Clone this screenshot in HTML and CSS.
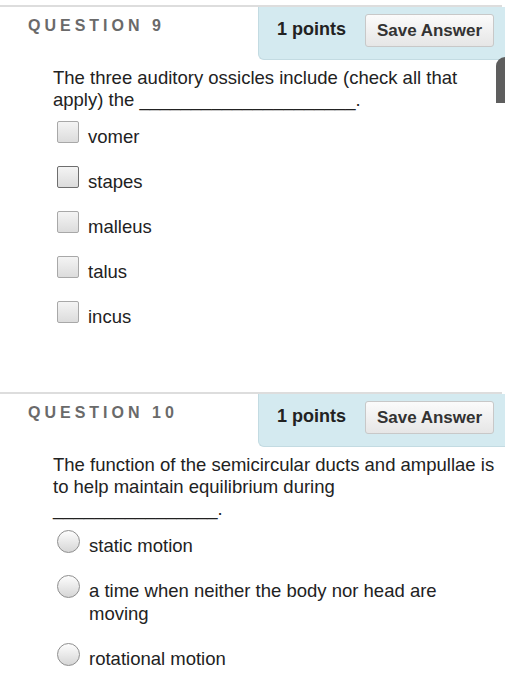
FILE: index.html
```html
<!DOCTYPE html>
<html lang="en">
<head>
<meta charset="utf-8">
<title>Quiz</title>
<link rel="stylesheet" href="styles.css">
</head>
<body>
<section class="question q9">
  <header class="q-head">
    <h2 class="q-title">QUESTION 9</h2>
    <div class="q-points">
      <span class="pts">1 points</span>
      <button class="save" type="button">Save Answer</button>
    </div>
  </header>
  <div class="q-body">
    <p class="q-text">The three auditory ossicles include (check all that apply) the _____________________.</p>
    <ul class="opts">
      <li class="opt"><span class="check"></span><span class="lbl">vomer</span></li>
      <li class="opt"><span class="check focus"></span><span class="lbl">stapes</span></li>
      <li class="opt"><span class="check"></span><span class="lbl">malleus</span></li>
      <li class="opt"><span class="check"></span><span class="lbl">talus</span></li>
      <li class="opt"><span class="check"></span><span class="lbl">incus</span></li>
    </ul>
  </div>
  <div class="scroll-tab"></div>
</section>
<section class="question q10">
  <header class="q-head">
    <h2 class="q-title">QUESTION 10</h2>
    <div class="q-points">
      <span class="pts">1 points</span>
      <button class="save" type="button">Save Answer</button>
    </div>
  </header>
  <div class="q-body">
    <p class="q-text">The function of the semicircular ducts and ampullae is to help maintain equilibrium during<br>________________.</p>
    <ul class="opts">
      <li class="opt"><span class="radio"></span><span class="lbl">static motion</span></li>
      <li class="opt"><span class="radio"></span><span class="lbl">a time when neither the body nor head are moving</span></li>
      <li class="opt"><span class="radio"></span><span class="lbl">rotational motion</span></li>
    </ul>
  </div>
</section>
</body>
</html>
```
FILE: styles.css
```css
* { box-sizing: border-box; }
html, body { margin: 0; padding: 0; background: #fff; }
body {
  padding-top: 5px;
  font-family: "Liberation Sans", Arial, sans-serif;
  color: #222;
  width: 505px;
  overflow: hidden;
}
.question {
  position: relative;
  border-top: 2px solid #dddddd;
  margin-right: 3px;
}
.q9 { padding-bottom: 64px; }
.q-head {
  display: flex;
  align-items: flex-start;
}
.q-title {
  flex: 1;
  margin: 9px 0 0;
  padding-left: 28px;
  font-size: 16px;
  line-height: 20px;
  font-weight: bold;
  letter-spacing: 4px;
  color: #6a6a6a;
}
.q-points {
  width: 247px;
  height: 53px;
  margin-right: -3px;
  display: flex;
  align-items: flex-start;
  justify-content: space-between;
  padding: 7px 11px 0 18px;
  background: #d4eaf0;
  border: 1px solid #c3dbe2;
  border-top: none;
  border-right: none;
  border-radius: 0 0 0 6px;
}
.pts {
  font-size: 18px;
  font-weight: bold;
  line-height: 31px;
  color: #222;
}
.save {
  width: 129px;
  height: 33px;
  padding: 0;
  font-family: "Liberation Sans", Arial, sans-serif;
  font-size: 17px;
  font-weight: bold;
  color: #333;
  background: linear-gradient(#fbfbfb, #e6e6e6);
  border: 1px solid #c8c8c8;
  border-radius: 3px;
}
.q-body {
  padding-left: 53px;
}
.q-text {
  margin: 7px 0 0;
  font-size: 18.5px;
  line-height: 22px;
}
.opts {
  list-style: none;
  margin: 10px 0 0;
  padding: 0 40px 0 4px;
  display: flex;
  flex-direction: column;
  gap: 18px;
}
.opt {
  display: flex;
  align-items: flex-start;
  gap: 9px;
}
.lbl {
  padding-top: 4px;
  font-size: 18.5px;
  line-height: 23px;
}
.check {
  flex: none;
  width: 22px;
  height: 22px;
  border: 1px solid #a8a8a8;
  border-radius: 2px;
  background: linear-gradient(#f4f4f4, #dcdcdc);
}
.check.focus { border-color: #6e6e6e; }
.radio {
  flex: none;
  width: 23px;
  height: 23px;
  border: 1px solid #8e8e8e;
  border-radius: 50%;
  background: linear-gradient(#fdfdfd, #d6d6d6);
}
.scroll-tab {
  position: absolute;
  right: -3px;
  top: 50px;
  width: 9px;
  height: 46px;
  background: #5e5e5e;
  border-radius: 9px 0 0 0;
}
```
